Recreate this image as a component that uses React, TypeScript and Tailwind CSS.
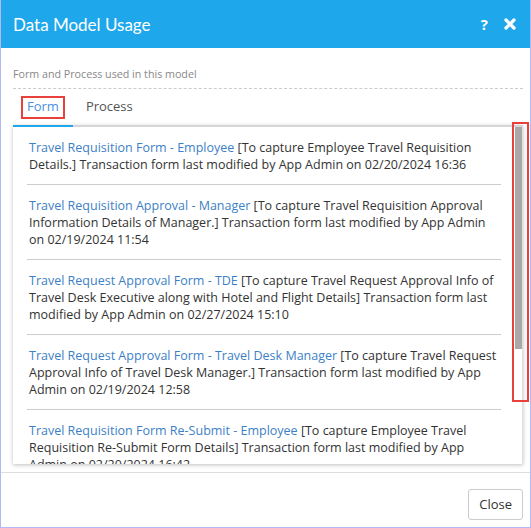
import React from 'react';

interface UsageItem {
    name: string;
    description: string;
    modified: string;
}

const forms: UsageItem[] = [
    {
        name: 'Travel Requisition Form - Employee',
        description: 'To capture Employee Travel Requisition Details.',
        modified: '02/20/2024 16:36',
    },
    {
        name: 'Travel Requisition Approval - Manager',
        description: 'To capture Travel Requisition Approval Information Details of Manager.',
        modified: '02/19/2024 11:54',
    },
    {
        name: 'Travel Request Approval Form - TDE',
        description: 'To capture Travel Request Approval Info of Travel Desk Executive along with Hotel and Flight Details',
        modified: '02/27/2024 15:10',
    },
    {
        name: 'Travel Request Approval Form - Travel Desk Manager',
        description: 'To capture Travel Request Approval Info of Travel Desk Manager.',
        modified: '02/19/2024 12:58',
    },
    {
        name: 'Travel Requisition Form Re-Submit - Employee',
        description: 'To capture Employee Travel Requisition Re-Submit Form Details',
        modified: '02/20/2024 16:42',
    },
];

export default function App() {
    return (
        <div className="w-[531px] h-[528px] flex flex-col border-x border-b border-[#b4b8f4] bg-white font-['Open_Sans',sans-serif] text-[#333]">
            {/* header */}
            <div className="h-[48px] shrink-0 bg-[#1ea7ea] flex items-center justify-between pl-[12px] pr-[14px]">
                <h1 className="font-['Lato',sans-serif] text-[17px] text-white leading-none">Data Model Usage</h1>
                <div className="flex items-center gap-[16px] text-white">
                    <span className="text-[15px] font-bold leading-none">?</span>
                    <svg width="12" height="12" viewBox="0 0 12 12">
                        <path d="M2 2 L10 10 M10 2 L2 10" stroke="white" strokeWidth="3.2" strokeLinecap="round" />
                    </svg>
                </div>
            </div>

            {/* body */}
            <div className="h-[424px] shrink-0 pl-[12px] pr-[7px] pt-[19px] flex flex-col relative">
                <p className="text-[10.7px] leading-[15px] text-[#888] pb-[6px] border-b border-dashed border-[#ccc]">
                    Form and Process used in this model
                </p>

                <div className="flex h-[38px] items-end relative z-10">
                    <div className="h-[38px] px-[8px] flex items-center border-b-2 border-[#1ea7ea]">
                        <span className="inline-flex items-center h-[23px] px-[4px] border-2 border-[#e8413c] text-[13px] text-[#4a90e2]">
                            Form
                        </span>
                    </div>
                    <div className="h-[38px] px-[13px] flex items-center border-b-2 border-transparent text-[13px] text-[#555]">
                        Process
                    </div>
                </div>

                <div className="-mt-[2px] h-[339px] flex border-t-2 border-[#d6d6d6] shadow-[0_1px_4px_rgba(0,0,0,0.25)] overflow-hidden">
                    <div className="flex-1 overflow-hidden">
                        {forms.map((f) => (
                            <div key={f.name} className="mx-[14px] px-[2px] pt-[12px] pb-[11px] border-b border-[#ccc] text-[12.5px] leading-[17px]">
                                <span className="text-[#3d7fc6]">{f.name}</span> [{f.description}] Transaction form last modified by
                                App Admin on {f.modified}
                            </div>
                        ))}
                    </div>
                    {/* scrollbar */}
                    <div className="w-[8px] shrink-0 flex justify-end border-r border-[#e0e0e0]">
                        <div className="w-[7px] h-[222px] bg-[#a8a8a8]" />
                    </div>
                </div>

                {/* highlight around scrollbar */}
                <div className="absolute left-[511px] top-[74px] w-[17px] h-[280px] border-2 border-[#e8413c] pointer-events-none" />
            </div>

            {/* footer */}
            <div className="flex-1 border-t border-[#ddd] flex justify-end items-start pt-[16px] pr-[7px]">
                <button className="h-[31px] px-[10px] rounded-[3px] border border-[#ccc] bg-white text-[13px] text-[#333]">
                    Close
                </button>
            </div>
        </div>
    );
}
